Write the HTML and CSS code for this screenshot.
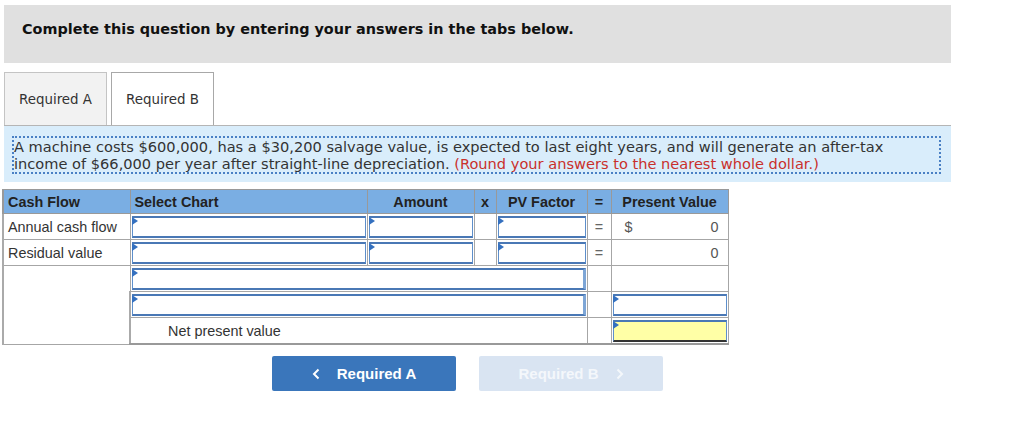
FILE: index.html
```html
<!DOCTYPE html>
<html>
<head>
<meta charset="utf-8">
<link rel="stylesheet" href="styles.css">
</head>
<body>
<div class="page">
  <div class="banner">Complete this question by entering your answers in the tabs below.</div>
  <div class="tabs">
    <div class="tab">Required A</div>
    <div class="tab active">Required B</div>
  </div>
  <div class="prompt">
    <div class="prompt-inner">
      <div class="line">A machine costs $600,000, has a $30,200 salvage value, is expected to last eight years, and will generate an after-tax</div>
      <div class="line"><span>income of $66,000 per year after straight-line depreciation.</span> <span class="red">(Round your answers to the nearest whole dollar.)</span></div>
    </div>
  </div>
  <table class="grid">
    <colgroup>
      <col class="c1"><col class="c2"><col class="c3"><col class="c4"><col class="c5"><col class="c6"><col class="c7">
    </colgroup>
    <tr class="head">
      <th class="left">Cash Flow</th>
      <th class="left">Select Chart</th>
      <th>Amount</th>
      <th>x</th>
      <th>PV Factor</th>
      <th>=</th>
      <th>Present Value</th>
    </tr>
    <tr>
      <td class="label">Annual cash flow</td>
      <td class="inp"><div class="box"></div></td>
      <td class="inp"><div class="box"></div></td>
      <td></td>
      <td class="inp"><div class="box"></div></td>
      <td class="eq">=</td>
      <td class="val"><span class="dollar">$</span><span class="num">0</span></td>
    </tr>
    <tr>
      <td class="label">Residual value</td>
      <td class="inp"><div class="box"></div></td>
      <td class="inp"><div class="box"></div></td>
      <td></td>
      <td class="inp"><div class="box"></div></td>
      <td class="eq">=</td>
      <td class="val"><span class="num">0</span></td>
    </tr>
    <tr>
      <td rowspan="3"></td>
      <td class="inp" colspan="4"><div class="box wide"></div></td>
      <td></td>
      <td></td>
    </tr>
    <tr>
      <td class="inp" colspan="4"><div class="box wide"></div></td>
      <td></td>
      <td class="inp"><div class="box pv"></div></td>
    </tr>
    <tr class="last">
      <td colspan="4" class="npv">Net present value</td>
      <td></td>
      <td class="inp"><div class="box pv yellow"></div></td>
    </tr>
  </table>
  <div class="nav">
    <div class="btn prev"><svg class="chev" width="8" height="12" viewBox="0 0 8 12"><polyline points="6.5,1.5 2,6 6.5,10.5" fill="none" stroke="#ffffff" stroke-width="2"/></svg>Required A</div>
    <div class="btn next disabled">Required B<svg class="chev r" width="8" height="12" viewBox="0 0 8 12"><polyline points="1.5,1.5 6,6 1.5,10.5" fill="none" stroke="#f4f7fb" stroke-width="2"/></svg></div>
  </div>
</div>
</body>
</html>
```
FILE: styles.css
```css
html, body {
  margin: 0;
  padding: 0;
  background: #ffffff;
}
.page {
  padding: 5px 0 0 4px;
  font-family: "DejaVu Sans", Verdana, sans-serif;
  color: #222;
}
.banner {
  width: 947px;
  height: 58px;
  background: #e0e0e0;
  box-sizing: border-box;
  padding: 16px 0 0 18px;
  font-weight: bold;
  font-size: 14.4px;
  color: #111;
}
.tabs {
  display: flex;
  gap: 4px;
  margin-top: 9px;
  height: 53px;
}
.tab {
  width: 103px;
  box-sizing: border-box;
  border: 1px solid #c4c4c4;
  border-bottom: none;
  background: #f2f2f2;
  font-size: 13.4px;
  color: #333;
  display: flex;
  align-items: center;
  justify-content: center;
  padding-top: 1px;
}
.tab.active {
  background: #ffffff;
  border-color: #a8a8a8;
}
.prompt {
  width: 947px;
  height: 57px;
  background: #d9edfb;
  border-top: 1px solid #b5b5b5;
  box-sizing: border-box;
  padding: 10px 10px 0 8px;
}
.prompt-inner {
  border: 2px dotted #4a80c4;
  font-size: 14.6px;
  line-height: 16.5px;
  color: #333;
  box-sizing: border-box;
  height: 38px;
  padding-top: 1px;
}
.line {
  white-space: nowrap;
}
.red {
  color: #c9302c;
}
.grid {
  margin: 7px 0 0 -2px;
  border-collapse: collapse;
  table-layout: fixed;
  width: 725px;
  font-family: "Liberation Sans", Arial, sans-serif;
  font-size: 14.4px;
  color: #333;
}
.c1 { width: 127px; }
.c2 { width: 237px; }
.c3 { width: 107px; }
.c4 { width: 22px; }
.c5 { width: 91px; }
.c6 { width: 24px; }
.c7 { width: 117px; }
.grid td, .grid th {
  border: 1px solid #a6a6a6;
  height: 23px;
  padding: 0;
}
.grid tr.head th {
  background: #7aaee3;
  font-weight: bold;
  color: #222;
  text-align: center;
  height: 23px;
  border-color: #999;
}
.grid tr.head th.left {
  text-align: left;
  padding-left: 4px;
}
.grid tr.head th:first-child {
  border-left: 2px solid #999;
}
.grid td:first-child {
  border-left: 2px solid #aaa;
}
.grid tr.last td {
  border-bottom: 2px solid #999;
}
.grid td.label {
  padding-left: 4px;
}
.grid td.inp {
  padding: 1px;
}
.box {
  position: relative;
  height: 22px;
  box-sizing: border-box;
  border: 1px solid #5e8fcb;
  border-top: 2px solid #4a78b5;
  border-bottom: 2px solid #4a78b5;
  background: #fff;
}
.box::before {
  content: "";
  position: absolute;
  left: -1px;
  top: -1px;
  border-left: 6px solid #3470bf;
  border-top: 4px solid transparent;
  border-bottom: 4px solid transparent;
}
.box.wide {
  border-right: 3px solid #7ea6d6;
}
.box.yellow {
  background: #ffffa6;
  border-bottom: 2px solid #333;
}
.eq {
  text-align: center;
  color: #666;
}
.grid td.val {
  padding: 0 9px 0 13px;
}
.val .dollar {
  float: left;
  color: #555;
}
.val .num {
  float: right;
  color: #555;
}
.grid td.npv {
  padding-left: 37px;
}
.nav {
  display: flex;
  gap: 23px;
  margin: 11px 0 0 268px;
}
.btn {
  width: 184px;
  height: 35px;
  border-radius: 2px;
  display: flex;
  align-items: center;
  justify-content: center;
  font-family: "Liberation Sans", Arial, sans-serif;
  font-weight: bold;
  font-size: 15px;
  color: #fff;
}
.btn.prev {
  background: #3a76bb;
}
.btn.disabled {
  background: #d9e4f2;
  color: #f4f7fb;
}
.chev {
  margin-right: 17px;
}
.chev.r {
  margin-right: 0;
  margin-left: 17px;
}
```
